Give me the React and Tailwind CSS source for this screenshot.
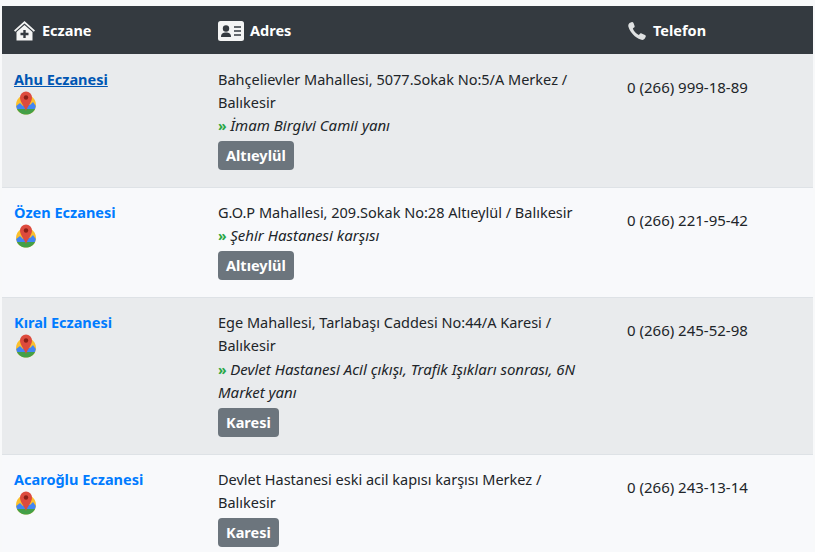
const pharmacies = [
    {
        name: 'Ahu Eczanesi',
        address: 'Bahçelievler Mahallesi, 5077.Sokak No:5/A Merkez / Balıkesir',
        note: 'İmam Birgivi Camii yanı',
        district: 'Altıeylül',
        phone: '0 (266) 999-18-89',
        active: true,
    },
    {
        name: 'Özen Eczanesi',
        address: 'G.O.P Mahallesi, 209.Sokak No:28 Altıeylül / Balıkesir',
        note: 'Şehir Hastanesi karşısı',
        district: 'Altıeylül',
        phone: '0 (266) 221-95-42',
    },
    {
        name: 'Kıral Eczanesi',
        address: 'Ege Mahallesi, Tarlabaşı Caddesi No:44/A Karesi / Balıkesir',
        note: 'Devlet Hastanesi Acil çıkışı, Trafik Işıkları sonrası, 6N Market yanı',
        district: 'Karesi',
        phone: '0 (266) 245-52-98',
    },
    {
        name: 'Acaroğlu Eczanesi',
        address: 'Devlet Hastanesi eski acil kapısı karşısı Merkez / Balıkesir',
        district: 'Karesi',
        phone: '0 (266) 243-13-14',
    },
];

function MapPin() {
    return (
        <svg width="22" height="24" viewBox="0 0 22 24" className="ml-[1px] block">
            <path d="M1 14 C1 10 3 7 6 5 H16 C19 7 21 10 21 14 C21 19 17 23.5 11 23.5 C5 23.5 1 19 1 14Z" fill="#fbc02d" />
            <path d="M1.2 15 L5 12 L8 15 L11 12 L15 14 L18 11 L20.8 15 C20.6 16 20.3 17 20 18 H2 C1.7 17 1.4 16 1.2 15Z" fill="#4285f4" />
            <path d="M2 18 H20 C18.5 21.5 15 23.5 11 23.5 C7 23.5 3.5 21.5 2 18Z" fill="#43a047" />
            <path d="M11 20 C9.8 15.5 5 11.5 5 6.5 A6 6 0 0 1 17 6.5 C17 11.5 12.2 15.5 11 20Z" fill="#dd4b3e" />
            <circle cx="11" cy="6.5" r="2.2" fill="#8a1f17" />
        </svg>
    );
}

function HomeIcon() {
    return (
        <svg width="21" height="20" viewBox="0 0 21 20" fill="#f3f4f4" className="mr-[1px]">
            <path d="M10.5 0 L21 9.5 L19.8 10.8 L10.5 2.4 L1.2 10.8 L0 9.5Z" />
            <path d="M10.5 4 L18.5 11 V19.5 H2.5 V11Z M9.3 9 V11.8 H6.5 V14.2 H9.3 V17 H11.7 V14.2 H14.5 V11.8 H11.7 V9Z" fillRule="evenodd" />
        </svg>
    );
}

function CardIcon() {
    return (
        <svg width="26" height="20" viewBox="0 0 26 20">
            <rect width="26" height="20" rx="2.5" fill="#f3f4f4" />
            <circle cx="8" cy="7.5" r="3.2" fill="#343a40" />
            <path d="M3 16 C3 12.5 5 11.5 8 11.5 C11 11.5 13 12.5 13 16Z" fill="#343a40" />
            <path d="M16 6 H23 M16 10 H23 M16 14 H23" stroke="#343a40" strokeWidth="1.5" />
        </svg>
    );
}

function PhoneIcon() {
    return (
        <svg width="18" height="18" viewBox="0 0 18 18" fill="#dfe1e2" className="ml-[1px] mr-[1px]">
            <path d="M1.5 1 L4 0 C4.8 0 5.2 0.4 5.5 1 L6.6 4 C6.8 4.8 6.5 5.2 6 5.6 L4.8 6.6 C5.8 9.5 8 11.8 10.8 13 L12 11.8 C12.5 11.3 13 11.2 13.6 11.5 L17 13 C17.7 13.4 18 14 17.7 14.7 L16.8 16.6 C16 17.8 14.5 18.2 12.8 17.6 C7 15.6 2.2 10.4 0.5 5 C0 3.4 0.3 2 1.5 1Z" />
        </svg>
    );
}

export default function App() {
    return (
        <div className="h-[552px] overflow-hidden bg-[#f8f9fa] pt-[6px] px-[2px] font-['Noto_Sans',sans-serif] text-[14.5px] leading-[23.2px] text-[#212529]">
            <table className="w-[811px] table-fixed border-collapse">
                <thead>
                    <tr className="h-[48px] bg-[#343a40] text-left text-white">
                        <th className="w-[204px] px-3 pt-[2px] align-middle font-bold">
                            <span className="flex items-center gap-[6px]"><HomeIcon />Eczane</span>
                        </th>
                        <th className="w-[409px] px-3 pt-[2px] align-middle font-bold">
                            <span className="flex items-center gap-[6px]"><CardIcon />Adres</span>
                        </th>
                        <th className="px-3 pt-[2px] align-middle font-bold">
                            <span className="flex items-center gap-[6px]"><PhoneIcon />Telefon</span>
                        </th>
                    </tr>
                </thead>
                <tbody>
                    {pharmacies.map((p, i) => (
                        <tr key={p.name} className={i % 2 === 0 ? 'bg-[#e9ebed] border-b border-[#dee2e6]' : 'bg-[#f8f9fb] border-b border-[#dee2e6]'}>
                            <td className={i === 0 ? 'px-3 pt-[14px] align-top' : 'px-3 pt-[13px] align-top'}>
                                <a href="#" className={p.active ? 'font-bold text-[#0056b3] underline' : 'font-bold text-[#007bff]'}>{p.name}</a>
                                <MapPin />
                            </td>
                            <td className={i === 0 ? 'pl-3 pr-[17px] pt-[14px] pb-[16.9px] align-top' : 'pl-3 pr-[17px] pt-[13px] pb-[16.9px] align-top'}>
                                <div>{p.address}</div>
                                {p.note && (
                                    <div className="text-[15px] italic">
                                        <span className="text-[14px] not-italic font-bold text-[#28a745]">» </span>{p.note}
                                    </div>
                                )}
                                <span className="mt-[3.5px] block w-fit rounded-[4px] bg-[#6c757d] px-2 py-[3px] text-[14.5px] font-bold text-white">{p.district}</span>
                            </td>
                            <td className={i === 0 ? 'px-3 pt-[22px] align-top text-[15px]' : 'px-3 pt-[21px] align-top text-[15px]'}>{p.phone}</td>
                        </tr>
                    ))}
                </tbody>
            </table>
        </div>
    );
}
